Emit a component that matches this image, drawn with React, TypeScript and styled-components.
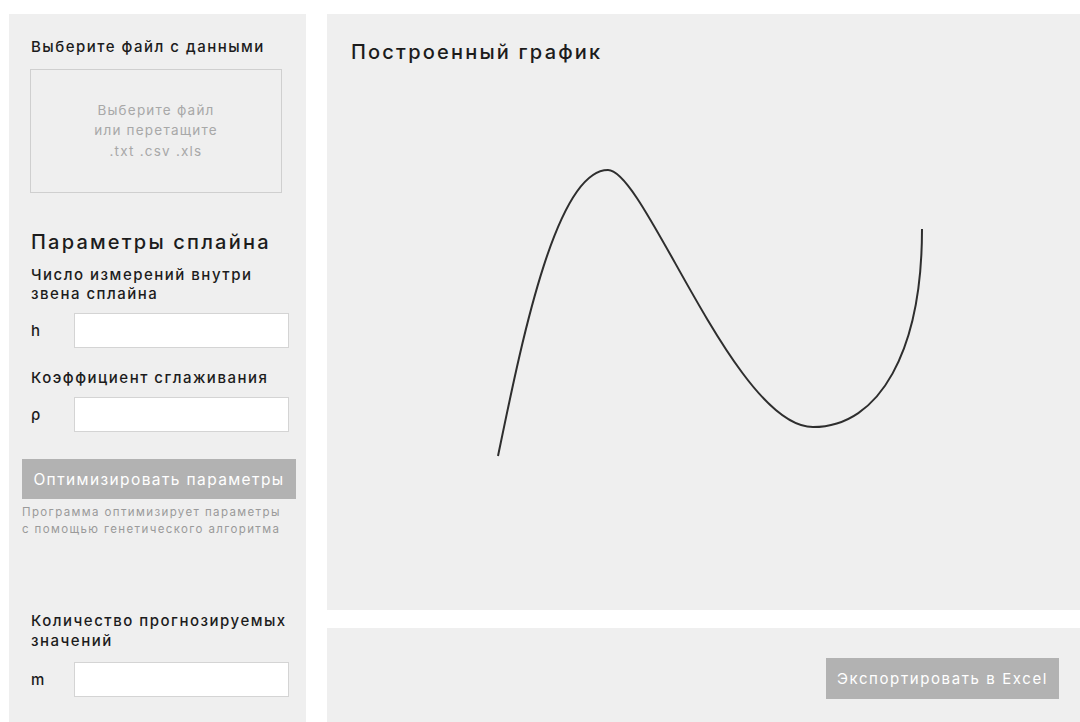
import React from 'react';
import styled, { createGlobalStyle } from 'styled-components';

const GlobalStyle = createGlobalStyle`
  html, body {
    margin: 0;
    padding: 0;
    background: #ffffff;
  }
  body {
    font-family: Inter, "Liberation Sans", Arial, sans-serif;
    color: #1c1c1c;
    letter-spacing: 0.1em;
  }
`;

const Page = styled.div`
  display: flex;
  gap: 21px;
  height: 100vh;
  padding: 14px 0 0 9px;
  box-sizing: border-box;
  overflow: hidden;
`;

const Sidebar = styled.aside`
  width: 297px;
  flex-shrink: 0;
  background: #efefef;
  padding: 0 17px 0 21px;
  box-sizing: border-box;
  display: flex;
  flex-direction: column;
`;

const Label = styled.div<{ $top: number }>`
  font-size: 15px;
  font-weight: 500;
  letter-spacing: 0.1em;
  line-height: 19.5px;
  margin-top: ${p => p.$top}px;
  padding-left: 1px;
  white-space: nowrap;
`;

const SectionTitle = styled.h2`
  font-size: 20px;
  font-weight: 500;
  letter-spacing: 0.11em;
  line-height: 24px;
  margin: 37px 0 0 1px;
  white-space: nowrap;
`;

const DropZone = styled.div`
  margin-top: 12px;
  width: 252px;
  height: 124px;
  border: 1px solid #cfcfcf;
  box-sizing: border-box;
  display: flex;
  justify-content: center;
  padding-top: 30px;
  text-align: center;
  color: #a8a8a8;
  font-size: 13.5px;
  letter-spacing: 0.09em;
  line-height: 20.5px;
`;

const FieldRow = styled.div<{ $top: number }>`
  display: flex;
  align-items: center;
  margin-top: ${p => p.$top}px;
`;

const FieldName = styled.span`
  width: 43px;
  padding-left: 1px;
  font-size: 15px;
  font-weight: 500;
`;

const Input = styled.input`
  width: 216px;
  height: 35px;
  box-sizing: border-box;
  border: 1px solid #d4d4d4;
  background: #ffffff;
  outline: none;
`;

const GreyButton = styled.button`
  background: #b2b2b2;
  color: #ffffff;
  border: none;
  font-family: inherit;
  letter-spacing: inherit;
  font-size: 15px;
  cursor: pointer;
  padding: 0;
  white-space: nowrap;
`;

const OptimizeButton = styled(GreyButton)`
  margin: 27px 0 0 -8px;
  width: 274px;
  height: 40px;
  font-size: 15.5px;
  letter-spacing: 0.09em;
`;

const Hint = styled.p`
  margin: 5px 0 0 -8px;
  font-size: 11.5px;
  letter-spacing: 0.12em;
  line-height: 17px;
  color: #9a9a9a;
  white-space: nowrap;
`;

const Main = styled.main`
  flex: 1;
  display: flex;
  flex-direction: column;
  gap: 18px;
`;

const ChartPanel = styled.section`
  height: 596px;
  background: #efefef;
  display: flex;
  flex-direction: column;
`;

const ChartTitle = styled.h1`
  font-size: 20px;
  font-weight: 500;
  letter-spacing: 0.11em;
  margin: 0;
  padding: 26px 24px 0;
  line-height: 24px;
  height: 80px;
  box-sizing: border-box;
`;

const Plot = styled.svg`
  display: block;
  flex: 1;
  width: 100%;
`;

const Footer = styled.section`
  flex: 1;
  background: #efefef;
  display: flex;
  justify-content: flex-end;
  align-items: flex-start;
  padding: 30px 21px 0 0;
`;

const ExportButton = styled(GreyButton)`
  width: 233px;
  height: 41px;
`;

function Field({ name, top }: { name: string; top: number }) {
  return (
    <FieldRow $top={top}>
      <FieldName>{name}</FieldName>
      <Input type="text" />
    </FieldRow>
  );
}

function App() {
  return (
    <>
      <GlobalStyle />
      <Page>
        <Sidebar>
          <Label $top={23}>Выберите файл с данными</Label>
          <DropZone>
            <div>
              Выберите файл<br />
              или перетащите<br />
              .txt .csv .xls
            </div>
          </DropZone>
          <SectionTitle>Параметры сплайна</SectionTitle>
          <Label $top={11}>
            Число измерений внутри<br />звена сплайна
          </Label>
          <Field name="h" top={9} />
          <Label $top={20}>Коэффициент сглаживания</Label>
          <Field name="ρ" top={10} />
          <OptimizeButton>Оптимизировать параметры</OptimizeButton>
          <Hint>
            Программа оптимизирует параметры<br />
            с помощью генетического алгоритма
          </Hint>
          <Label $top={73}>
            Количество прогнозируемых<br />значений
          </Label>
          <Field name="m" top={12} />
        </Sidebar>
        <Main>
          <ChartPanel>
            <ChartTitle>Построенный график</ChartTitle>
            <Plot viewBox="0 0 753 516" preserveAspectRatio="xMinYMin meet">
              <path
                d="M171,362 C193,256 228,76 281,76 C318,76 408,333 486,333 C553,333 595,256 595,135"
                fill="none"
                stroke="#2e2e2e"
                strokeWidth={2}
              />
            </Plot>
          </ChartPanel>
          <Footer>
            <ExportButton>Экспортировать в Excel</ExportButton>
          </Footer>
        </Main>
      </Page>
    </>
  );
}

export default App;
